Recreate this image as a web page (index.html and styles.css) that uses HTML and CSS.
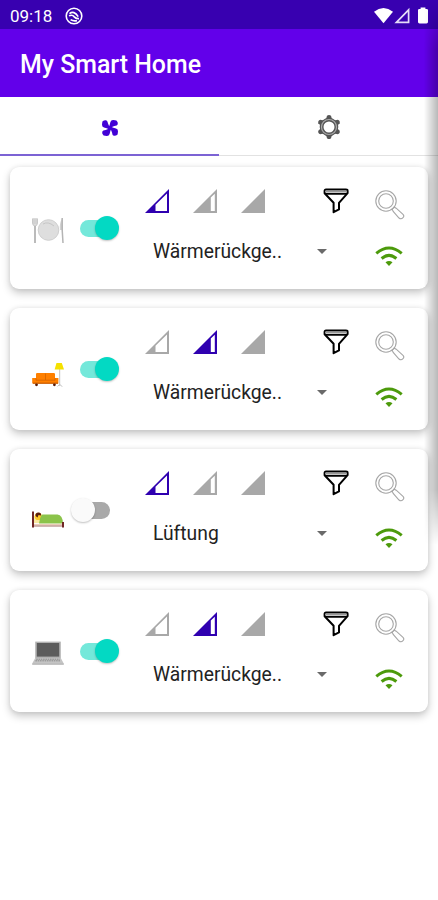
FILE: index.html
```
<!DOCTYPE html>
<html lang="de">

<head>
    <meta charset="UTF-8" />
    <meta name="viewport" content="width=device-width, initial-scale=1" />
    <title>My Smart Home</title>
    <link rel="stylesheet" href="styles.css">
</head>

<body>
    <!-- Shared icons -->
    <svg class="sprite" aria-hidden="true">
        <symbol id="level-low" viewBox="0 0 24 24">
            <path fill="currentColor" fill-rule="evenodd" d="M0 24L24 0V24ZM10.5 15.8V22H22V4.6Z" />
        </symbol>
        <symbol id="level-mid" viewBox="0 0 24 24">
            <path fill="currentColor" fill-rule="evenodd" d="M0 24L24 0V24ZM17.8 8.6V22H21.8V4.8Z" />
        </symbol>
        <symbol id="level-high" viewBox="0 0 24 24">
            <path fill="currentColor" d="M0 24L24 0V24Z" />
        </symbol>
        <symbol id="filter" viewBox="0 0 26 26">
            <path d="M3 1.6H23Q24.6 1.6 24.6 3V5.2L16 14.8V21.4L10.6 24.2V14.8L1.6 5.2V3Q1.6 1.6 3 1.6Z" fill="#fff" stroke="#000" stroke-width="2" stroke-linejoin="round" />
            <path d="M2 3.4H24" stroke="#999" stroke-width="1.6" />
            <path d="M2 5.8H24" stroke="#000" stroke-width="1.9" />
        </symbol>
        <symbol id="search" viewBox="0 0 30 30">
            <g fill="none" stroke="#a6a6a6" stroke-width="1.1">
                <circle cx="11" cy="11" r="10.2" />
                <circle cx="11" cy="11" r="7.3" />
                <path d="M17.2 19.2L19.2 17.2L21.2 18.2L28 24.3Q29.6 26 28 27.6Q26.2 29.6 24 28L18.2 21.4Z" />
            </g>
        </symbol>
        <symbol id="wifi" viewBox="0 0 28 20">
            <g fill="none" stroke="#4c9a0b" stroke-width="3">
                <path d="M1.3 7.4Q14 -3.4 26.7 7.4" />
                <path d="M6.6 12.5Q14 6.2 21.4 12.5" />
            </g>
            <path d="M10.5 16.3Q14 13.8 17.5 16.3L14 20Z" fill="#4c9a0b" />
        </symbol>
    </svg>

    <div class="status-bar">
        <span class="clock">09:18</span>
        <svg class="status-app" viewBox="0 0 18 18" fill="none" stroke="#fff">
            <circle cx="9" cy="9" r="7.8" stroke-width="1.6" />
            <path d="M4.5 6.6Q9 3.2 13.2 9.6M4 8.8Q7.5 7.4 9 9.6Q11 12 14 11.6M5.6 12.6Q8.5 14.5 12 13.6" stroke-width="1.7" />
        </svg>
        <svg class="status-icons" viewBox="0 0 56 18" fill="#fff">
            <path d="M0 4.8Q9.5 -2.6 19 4.8L9.5 16.2Z" />
            <path d="M22.4 15.4L34.6 2.8V15.4Z" fill="none" stroke="#e4dcf7" stroke-width="1.7" />
            <path d="M44 3Q44 2 45.5 2H46.6V.6H51.4V2H52.5Q54 2 54 3V15Q54 16.4 52.5 16.4H45.5Q44 16.4 44 15Z" />
        </svg>
    </div>

    <header class="app-bar">
        <h1>My Smart Home</h1>
    </header>

    <nav class="tabs">
        <a class="tab active" href="#" aria-label="Rooms">
            <svg class="fan" viewBox="0 0 18 18" fill="#4200d6">
                <path id="blade" d="M9.6 9.6L7.6 8.4Q9 5.6 9.4 3Q10 .8 12.4 1L15.4 1.4Q17.2 3.2 16.8 5.2Q16.2 6.8 13.4 7Q11.4 7.4 9.6 9.6Z" />
                <use href="#blade" transform="rotate(90 9 9)" />
                <use href="#blade" transform="rotate(180 9 9)" />
                <use href="#blade" transform="rotate(270 9 9)" />
            </svg>
        </a>
        <a class="tab" href="#" aria-label="Settings">
            <svg class="gear" viewBox="0 0 24 26">
                <g fill="#555">
                    <path id="tooth" d="M8.8 6L10 1.8Q12 0 14 1.8L15.2 6Z" />
                    <use href="#tooth" transform="rotate(60 12 13)" />
                    <use href="#tooth" transform="rotate(120 12 13)" />
                    <use href="#tooth" transform="rotate(180 12 13)" />
                    <use href="#tooth" transform="rotate(240 12 13)" />
                    <use href="#tooth" transform="rotate(300 12 13)" />
                </g>
                <circle cx="12" cy="13" r="7.4" fill="#fff" stroke="#555" stroke-width="3.8" />
                <circle cx="12" cy="13" r="7.5" fill="none" stroke="#aaa" stroke-width="1.2" />
            </svg>
        </a>
    </nav>

    <main class="rooms">
        <section class="card">
            <svg class="device" viewBox="0 0 32 32">
                <circle cx="16.5" cy="16" r="10.3" fill="#dedede" stroke="#cfcfcf" />
                <path d="M11 10Q16 7 22 12" fill="none" stroke="#c6c6c6" />
                <path d="M0.5 4.5V9Q.8 12 3 12Q5.2 12 5.5 9V4.5M2 4V10M4 4V10" fill="#ddd" stroke="#c8c8c8" stroke-width="1" />
                <path d="M3 12V29" stroke="#b4b4b4" stroke-width="1.8" />
                <path d="M30.2 4Q27 10 28 16H30.6Z" fill="#d2d2d2" />
                <path d="M30.2 4V16L31 29" fill="none" stroke="#b4b4b4" stroke-width="1.5" />
            </svg>
            <span class="switch on" role="switch" aria-checked="true"></span>
            <div class="levels">
                <svg class="level selected"><use href="#level-low" /></svg>
                <svg class="level"><use href="#level-mid" /></svg>
                <svg class="level"><use href="#level-high" /></svg>
            </div>
            <svg class="filter"><use href="#filter" /></svg>
            <svg class="search"><use href="#search" /></svg>
            <div class="mode"><span>Wärmerückge..</span><i class="caret"></i></div>
            <svg class="wifi"><use href="#wifi" /></svg>
        </section>

        <section class="card">
            <svg class="device" viewBox="0 -5 32 32">
                <path d="M27.7 9V26M25.5 26.4L27.7 24.4L30.5 26.8" fill="none" stroke="#c4c4c4" stroke-width="1" />
                <path d="M24.5 3H29.8L32 9.6H22.6Z" fill="#f5e100" />
                <path d="M4 14Q4 13 5.2 13H21.8Q23 13 23 14V18H26.4V23.6H.2V18H4Z" fill="#ff8000" />
                <path d="M4 18V20.2H23V18M13.5 13.5V20" fill="none" stroke="#d96600" stroke-width=".9" />
                <path d="M1 23.2H26" stroke="#c95b00" stroke-width="1.2" />
                <circle cx="4.5" cy="24.8" r="1.4" fill="#5a1c08" />
                <circle cx="22.4" cy="24.8" r="1.4" fill="#5a1c08" />
            </svg>
            <span class="switch on" role="switch" aria-checked="true"></span>
            <div class="levels">
                <svg class="level"><use href="#level-low" /></svg>
                <svg class="level selected"><use href="#level-mid" /></svg>
                <svg class="level"><use href="#level-high" /></svg>
            </div>
            <svg class="filter"><use href="#filter" /></svg>
            <svg class="search"><use href="#search" /></svg>
            <div class="mode"><span>Wärmerückge..</span><i class="caret"></i></div>
            <svg class="wifi"><use href="#wifi" /></svg>
        </section>

        <section class="card">
            <svg class="device" viewBox="0 -6 32 32">
                <path d="M2 21V14.5L6 12L9 21Z" fill="#f8e9a0" />
                <circle cx="6.3" cy="14.4" r="3.6" fill="#ffc928" />
                <path d="M3.6 14Q3 10.6 6.5 10.5Q9.5 10.6 9 13.5L6.5 13L5.5 15.6Z" fill="#5c1f10" />
                <path d="M7 21.4Q8.6 12.6 10.5 12.6H25.5Q30.6 13.2 31 21.4Z" fill="#8bc34a" />
                <path d="M1 22.6H31" stroke="#eccdb8" stroke-width="1.4" />
                <path d="M1 9.6V25.4M31 20V25.4" stroke="#6b1d1d" stroke-width="1.9" />
                <path d="M2 24H30" stroke="#8e4b3f" stroke-width=".8" />
            </svg>
            <span class="switch" role="switch" aria-checked="false"></span>
            <div class="levels">
                <svg class="level selected"><use href="#level-low" /></svg>
                <svg class="level"><use href="#level-mid" /></svg>
                <svg class="level"><use href="#level-high" /></svg>
            </div>
            <svg class="filter"><use href="#filter" /></svg>
            <svg class="search"><use href="#search" /></svg>
            <div class="mode"><span>Lüftung</span><i class="caret"></i></div>
            <svg class="wifi"><use href="#wifi" /></svg>
        </section>

        <section class="card">
            <svg class="device" viewBox="0 0 32 32">
                <path d="M3.2 4.6H28.8V21H3.2Z" fill="#b2b2b2" />
                <path d="M4.8 6H27.2V19.6H4.8Z" fill="#5c5c5c" />
                <path d="M3.2 21H28.8L31.6 26.2H.4Z" fill="#c4c4c4" />
                <path d="M4.2 22.2H27.8M3.4 23.8H28.6" stroke="#858585" stroke-width=".9" stroke-dasharray="1.6 .7" />
                <path d="M.2 26.4H31.8V27.6H.2Z" fill="#9c9c9c" />
            </svg>
            <span class="switch on" role="switch" aria-checked="true"></span>
            <div class="levels">
                <svg class="level"><use href="#level-low" /></svg>
                <svg class="level selected"><use href="#level-mid" /></svg>
                <svg class="level"><use href="#level-high" /></svg>
            </div>
            <svg class="filter"><use href="#filter" /></svg>
            <svg class="search"><use href="#search" /></svg>
            <div class="mode"><span>Wärmerückge..</span><i class="caret"></i></div>
            <svg class="wifi"><use href="#wifi" /></svg>
        </section>
    </main>

    <div class="edge-shadow"></div>
</body>
</html>
```
FILE: styles.css
```
* {
    box-sizing: border-box;
}

body {
    position: relative;
    margin: 0;
    height: 900px;
    overflow: hidden;
    background: #fff;
    font-family: Roboto, sans-serif;
}

svg {
    display: block;
}

.sprite {
    position: absolute;
    width: 0;
    height: 0;
}

.status-bar {
    display: flex;
    align-items: center;
    height: 29px;
    padding: 2px 8px 0 10px;
    background: #3800b0;
    color: #fff;
}

.clock {
    width: 55px;
    font-size: 17px;
}

.status-app {
    width: 18px;
    height: 18px;
}

.status-icons {
    width: 56px;
    height: 18px;
    margin-left: auto;
}

.app-bar {
    display: flex;
    align-items: center;
    height: 68px;
    padding: 3px 20px 0;
    background: #6200ea;
    color: #fff;
}

h1 {
    margin: 0;
    font-size: 24.9px;
    font-weight: 500;
}

.tabs {
    display: flex;
    height: 59px;
}

.tab {
    display: flex;
    flex: 1;
    align-items: center;
    justify-content: center;
    border-bottom: 1px solid #e2e2e2;
}

.tab.active {
    border-bottom: 2px solid #7c63d4;
}

.fan {
    width: 18px;
    height: 18px;
    margin-top: 4px;
}

.gear {
    width: 24px;
    height: 26px;
    margin-top: 2px;
}

.rooms {
    display: flex;
    flex-direction: column;
    gap: 19px;
    padding: 11px 10px 19px;
}

.card {
    display: grid;
    grid-template-columns: 32px 48px 120px 25px 30px;
    grid-template-rows: 30px 32px;
    height: 122px;
    padding: 22px 0 0 22px;
    border-radius: 9px;
    background: #fff;
    box-shadow: 0 4px 9px rgba(0, 0, 0, 0.22), 0 0 5px rgba(0, 0, 0, 0.07);
}

.device {
    grid-row: 1 / 3;
    width: 32px;
    height: 32px;
    margin-top: 25px;
}

/* Track and thumb, thumb on the left when off */
.switch {
    position: relative;
    display: flex;
    grid-row: 1 / 3;
    align-items: center;
    width: 48px;
    height: 24px;
    margin: 27px 0 0 7px;
}

.switch::before {
    content: "";
    width: 30px;
    height: 17px;
    margin-left: 9px;
    border-radius: 9px;
    background: #a9a9a9;
}

.switch::after {
    content: "";
    position: absolute;
    left: 0;
    top: 0;
    width: 24px;
    height: 24px;
    border-radius: 50%;
    background: #fafafa;
    box-shadow: 0 1px 2px rgba(0, 0, 0, 0.25);
}

.switch.on::before {
    background: #74e8da;
}

.switch.on::after {
    left: 24px;
    background: #03d9c3;
}

.levels {
    display: flex;
    gap: 24px;
    margin-left: 33px;
}

.level {
    flex: none;
    width: 24px;
    height: 24px;
    color: #a8a8a8;
}

.level.selected {
    color: #2f00b0;
}

.filter {
    width: 26px;
    height: 26px;
    margin-left: 91px;
    margin-top: -1px;
}

.search {
    width: 30px;
    height: 30px;
    margin-left: 118px;
    margin-top: 1px;
}

.mode {
    display: flex;
    grid-column: 3 / 5;
    align-items: center;
    justify-content: space-between;
    width: 174px;
    height: 24px;
    margin: 20px 0 0 41px;
    color: #222;
    font-size: 19.3px;
    white-space: nowrap;
}

.caret {
    border: 5.5px solid transparent;
    border-top-color: #6a6a6a;
    border-bottom: 0;
}

.wifi {
    grid-column: 5;
    width: 28px;
    height: 20px;
    margin: 27px 0 0 118px;
}

/* Shade along the right side of the screen */
.edge-shadow {
    position: absolute;
    top: 0;
    right: 0;
    width: 14px;
    height: 545px;
    background: linear-gradient(to right, transparent, rgba(0, 0, 0, 0.28));
    -webkit-mask-image: linear-gradient(transparent, #000 50px, #000 490px, transparent);
    mask-image: linear-gradient(transparent, #000 50px, #000 490px, transparent);
}
```
